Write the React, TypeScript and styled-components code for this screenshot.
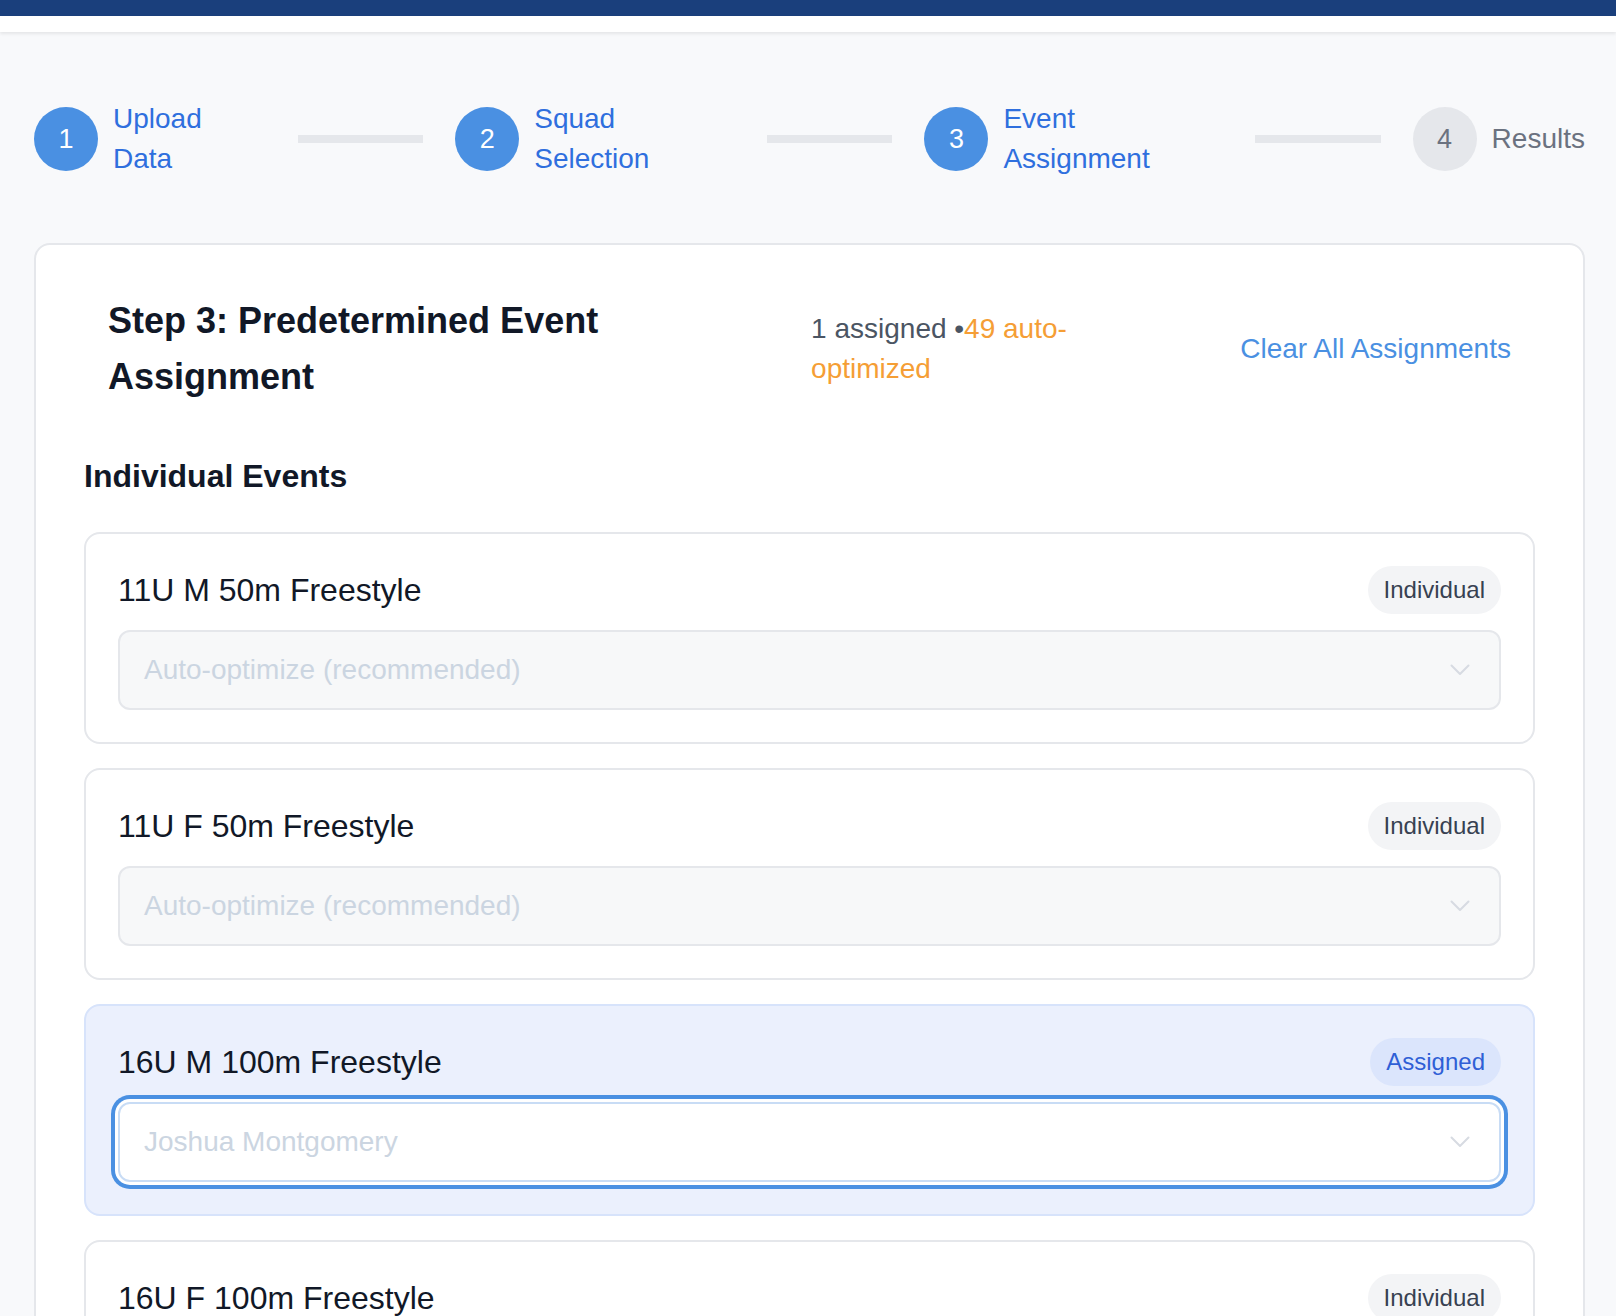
import React from 'react';
import styled, { createGlobalStyle, css } from 'styled-components';

const GlobalStyle = createGlobalStyle`
  * {
    box-sizing: border-box;
  }

  body {
    margin: 0;
    background: #f8f9fb;
    font-family: "Liberation Sans", Arial, Helvetica, sans-serif;
    color: #111827;
  }
`;

const TopBar = styled.div`
  height: 16px;
  background: #1a3f7c;
`;

const NavStrip = styled.div`
  position: relative;
  height: 16px;
  background: #ffffff;
  box-shadow: 0 2px 3px rgba(0, 0, 0, 0.08);
`;

const Page = styled.main`
  padding: 0 31px 0 34px;
`;

const Stepper = styled.nav`
  display: flex;
  align-items: center;
  padding: 67px 0 64px;
`;

const Step = styled.div<{ $width?: number }>`
  display: flex;
  align-items: center;
  gap: 15px;
  flex: 0 0 ${p => (p.$width ? `${p.$width}px` : 'auto')};
`;

const StepCircle = styled.div<{ $active: boolean }>`
  width: 64px;
  height: 64px;
  border-radius: 50%;
  flex-shrink: 0;
  display: flex;
  align-items: center;
  justify-content: center;
  font-size: 27px;
  background: ${p => (p.$active ? '#4a90e2' : '#e5e7eb')};
  color: ${p => (p.$active ? '#ffffff' : '#6b7280')};
`;

const StepLabel = styled.div<{ $active: boolean }>`
  width: min-content;
  font-size: 28px;
  line-height: 40px;
  color: ${p => (p.$active ? '#2f6fde' : '#6b7280')};
`;

const Connector = styled.div`
  flex: 1;
  height: 8px;
  margin: 0 32px;
  background: #e5e7eb;
`;

const Card = styled.section`
  background: #ffffff;
  border: 2px solid #e5e7eb;
  border-radius: 16px;
  padding: 48px;
`;

const CardHeader = styled.div`
  display: flex;
  align-items: center;
  justify-content: space-between;
  padding: 0 24px;
  margin-bottom: 47px;
`;

const Title = styled.h2`
  width: 535px;
  margin: 0;
  font-size: 36px;
  line-height: 56px;
  font-weight: 700;
  color: #111827;
`;

const Stats = styled.div`
  width: 265px;
  margin-left: 4px;
  font-size: 28px;
  line-height: 40px;
  color: #4b5563;
`;

const AutoCount = styled.span`
  color: #f59e35;
`;

const ClearButton = styled.button`
  background: none;
  border: 0;
  padding: 0;
  font-family: inherit;
  font-size: 28px;
  line-height: 40px;
  color: #4a90e2;
  cursor: pointer;
`;

const SectionTitle = styled.h3`
  margin: 0 0 32px;
  font-size: 32px;
  line-height: 48px;
  font-weight: 700;
  color: #111827;
`;

const EventList = styled.div`
  display: flex;
  flex-direction: column;
  gap: 24px;
`;

const EventCard = styled.div<{ $assigned: boolean }>`
  border: 2px solid ${p => (p.$assigned ? '#d7e3fb' : '#e5e7eb')};
  background: ${p => (p.$assigned ? '#ebf0fd' : '#ffffff')};
  border-radius: 16px;
  padding: 32px;
`;

const EventHead = styled.div`
  display: flex;
  align-items: center;
  justify-content: space-between;
  margin-bottom: 16px;
`;

const EventName = styled.div`
  font-size: 32px;
  line-height: 40px;
  color: #111827;
`;

const Badge = styled.span<{ $assigned: boolean }>`
  padding: 7px 16px;
  border-radius: 999px;
  font-size: 24px;
  line-height: 34px;
  background: ${p => (p.$assigned ? '#dbe5fc' : '#f3f4f6')};
  color: ${p => (p.$assigned ? '#2f5fd6' : '#374151')};
`;

const SelectBox = styled.div<{ $focused: boolean }>`
  height: 80px;
  display: flex;
  align-items: center;
  justify-content: space-between;
  padding: 0 29px 0 24px;
  border-radius: 12px;
  font-size: 28px;
  color: #cbd5e1;
  ${p =>
    p.$focused
      ? css`
          background: #ffffff;
          border: 2px solid #c8dcf5;
          box-shadow: 0 0 0 3px #ffffff, 0 0 0 7px #4a90e2;
        `
      : css`
          background: #f7f8f9;
          border: 2px solid #e5e7eb;
        `}
`;

const Chevron = () => (
  <svg width="20" height="12" viewBox="0 0 20 12" fill="none">
    <polyline points="1.5,1.5 10,10 18.5,1.5" stroke="#d7dbe2" strokeWidth="2" strokeLinecap="round" strokeLinejoin="round" />
  </svg>
);

const steps = [
  { n: 1, label: 'Upload Data', active: true, width: 232 },
  { n: 2, label: 'Squad Selection', active: true, width: 280 },
  { n: 3, label: 'Event Assignment', active: true, width: 299 },
  { n: 4, label: 'Results', active: false },
];

const events = [
  { name: '11U M 50m Freestyle', value: 'Auto-optimize (recommended)', assigned: false },
  { name: '11U F 50m Freestyle', value: 'Auto-optimize (recommended)', assigned: false },
  { name: '16U M 100m Freestyle', value: 'Joshua Montgomery', assigned: true },
  { name: '16U F 100m Freestyle', value: 'Auto-optimize (recommended)', assigned: false },
  { name: '13U M 50m Backstroke', value: 'Auto-optimize (recommended)', assigned: false },
];

const App: React.FC = () => {
  return (
    <>
      <GlobalStyle />
      <TopBar />
      <NavStrip />
      <Page>
        <Stepper>
          {steps.map((step, i) => (
            <React.Fragment key={step.n}>
              <Step $width={step.width}>
                <StepCircle $active={step.active}>{step.n}</StepCircle>
                <StepLabel $active={step.active}>{step.label}</StepLabel>
              </Step>
              {i < steps.length - 1 && <Connector />}
            </React.Fragment>
          ))}
        </Stepper>

        <Card>
          <CardHeader>
            <Title>Step 3: Predetermined Event Assignment</Title>
            <Stats>
              1 assigned •<AutoCount>49 auto-optimized</AutoCount>
            </Stats>
            <ClearButton>Clear All Assignments</ClearButton>
          </CardHeader>

          <SectionTitle>Individual Events</SectionTitle>

          <EventList>
            {events.map(ev => (
              <EventCard key={ev.name} $assigned={ev.assigned}>
                <EventHead>
                  <EventName>{ev.name}</EventName>
                  <Badge $assigned={ev.assigned}>{ev.assigned ? 'Assigned' : 'Individual'}</Badge>
                </EventHead>
                <SelectBox $focused={ev.assigned}>
                  <span>{ev.value}</span>
                  <Chevron />
                </SelectBox>
              </EventCard>
            ))}
          </EventList>
        </Card>
      </Page>
    </>
  );
};

export default App;
